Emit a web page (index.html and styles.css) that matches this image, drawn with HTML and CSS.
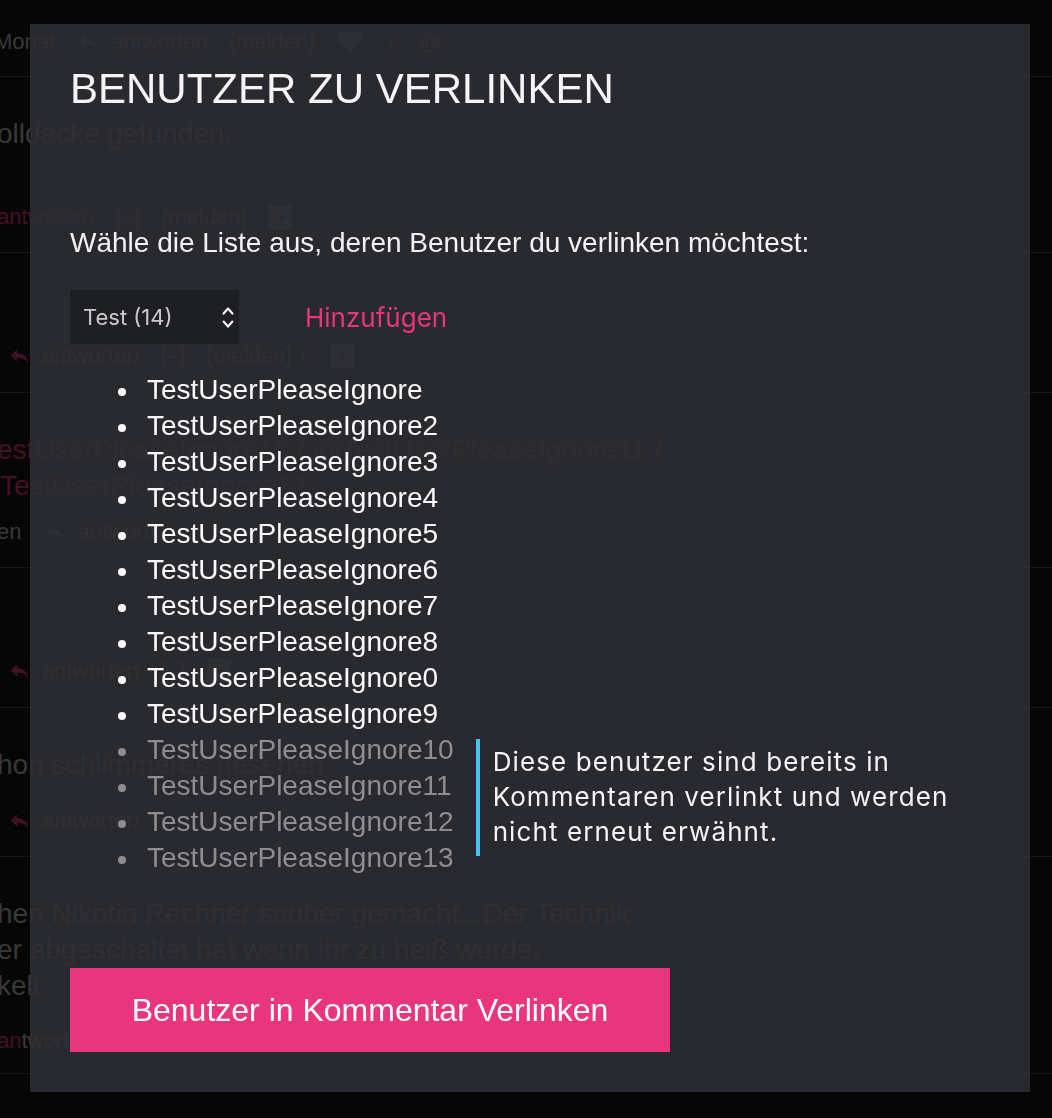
FILE: index.html
```html
<!DOCTYPE html>
<html lang="de">
<head>
<meta charset="utf-8">
<title>Benutzer zu verlinken</title>
<link rel="stylesheet" href="styles.css">
</head>
<body>
<div class="page">
  <div class="comment first">
    <div class="line meta"><span class="cut-m">Monat</span><svg class="reply g" viewBox="0 0 24 24"><path d="M10 5 L3 11.5 L10 18 V14 C15 14 19 15 22 20 C21 13 17 9 10 9 Z"/></svg><span>antworten</span><span>[melden]</span><svg class="heart" viewBox="0 0 24 24"><path d="M12 21 L3.5 12.5 C1 10 1 6 3.5 4 C6 2 9.5 2.5 12 5.5 C14.5 2.5 18 2 20.5 4 C23 6 23 10 20.5 12.5 Z"/></svg><span>↑</span><span>@</span></div>
  </div>
  <div class="comment">
    <div class="line text cut">olldecke gefunden.</div>
    <div class="line actions gap47"><span class="pink cut">antworten</span><span>[–]</span><span>[melden]</span><span class="box">+</span></div>
  </div>
  <div class="comment tall">
    <div class="line actions"><svg class="reply" viewBox="0 0 24 24"><path d="M10 5 L3 11.5 L10 18 V14 C15 14 19 15 22 20 C21 13 17 9 10 9 Z"/></svg><span>antworten</span><span>[–]</span><span>[melden] ↑</span><span class="box">+</span></div>
  </div>
  <div class="comment">
    <div class="line text pink cut">estUserPleaseIgnore10 / @TestUserPleaseIgnore11 /</div>
    <div class="line text pink">TestUserPleaseIgnore12</div>
    <div class="line actions gap10"><span class="cut">en</span><svg class="reply g" viewBox="0 0 24 24"><path d="M10 5 L3 11.5 L10 18 V14 C15 14 19 15 22 20 C21 13 17 9 10 9 Z"/></svg><span>antworten</span></div>
  </div>
  <div class="comment tall">
    <div class="line actions"><svg class="reply" viewBox="0 0 24 24"><path d="M10 5 L3 11.5 L10 18 V14 C15 14 19 15 22 20 C21 13 17 9 10 9 Z"/></svg><span>antworten</span><span>[–]</span><span class="box">+</span></div>
  </div>
  <div class="comment">
    <div class="line text cut">hon schlimmeres gesehen</div>
    <div class="line actions gap20"><svg class="reply" viewBox="0 0 24 24"><path d="M10 5 L3 11.5 L10 18 V14 C15 14 19 15 22 20 C21 13 17 9 10 9 Z"/></svg><span>antworten</span></div>
  </div>
  <div class="comment last">
    <div class="line text cut">hen Nikotin Rechner sauber gemacht...Der Technik</div>
    <div class="line text cut">er abgeschaltet hat wenn ihr zu heiß wurde,</div>
    <div class="line text cut">kelt</div>
    <div class="line actions gap19"><span class="pink cut">an</span><span class="tight">tworten</span></div>
  </div>
</div>

<div class="overlay"></div>

<div class="modal">
  <h1 class="modal-title">BENUTZER ZU VERLINKEN</h1>
  <p class="prompt">Wähle die Liste aus, deren Benutzer du verlinken möchtest:</p>
  <div class="picker">
    <div class="select">
      <span>Test (14)</span>
      <svg class="chevrons" viewBox="0 0 12 23"><path d="M1.6 7.6 L6 2.6 L10.4 7.6 M1.6 15.6 L6 20.6 L10.4 15.6"/></svg>
    </div>
    <a class="add">Hinzufügen</a>
  </div>
  <ul class="users">
    <li>TestUserPleaseIgnore</li>
    <li>TestUserPleaseIgnore2</li>
    <li>TestUserPleaseIgnore3</li>
    <li>TestUserPleaseIgnore4</li>
    <li>TestUserPleaseIgnore5</li>
    <li>TestUserPleaseIgnore6</li>
    <li>TestUserPleaseIgnore7</li>
    <li>TestUserPleaseIgnore8</li>
    <li>TestUserPleaseIgnore0</li>
    <li>TestUserPleaseIgnore9</li>
  </ul>
  <div class="linked">
    <ul class="users done">
      <li>TestUserPleaseIgnore10</li>
      <li>TestUserPleaseIgnore11</li>
      <li>TestUserPleaseIgnore12</li>
      <li>TestUserPleaseIgnore13</li>
    </ul>
    <p class="note">Diese benutzer sind bereits in Kommentaren verlinkt und werden nicht erneut erwähnt.</p>
  </div>
  <button class="submit">Benutzer in Kommentar Verlinken</button>
</div>
</body>
</html>
```

FILE: styles.css
```css
html, body {
  margin: 0;
  padding: 0;
  overflow: hidden;
}

body {
  background: #171717;
  font-family: "Liberation Sans", Arial, sans-serif;
  color: #bcbcbc;
  width: 1052px;
  height: 1118px;
}

/* ---------- background page ---------- */
.page {
  width: 1052px;
}

.comment {
  border-bottom: 1px solid #484848;
  padding: 39px 0 17px 0;
}

.comment.first {
  padding: 24px 0 16px 0;
}

.comment.tall {
  padding-top: 85px;
  padding-bottom: 18px;
}

.comment.last {
  padding-bottom: 14px;
}

.line {
  height: 36px;
  line-height: 36px;
  white-space: nowrap;
  display: flex;
  align-items: center;
}

.line.text {
  font-size: 28px;
}

.line.meta,
.line.actions {
  font-size: 22px;
  gap: 22px;
}

.gap47 { margin-top: 47px; }
.gap19 { margin-top: 19px; }
.gap10 { margin-top: 10px; }
.gap20 { margin-top: 20px; }

.cut { margin-left: -3px; }
.cut-m { margin-left: -6px; }
.tight { margin-left: -22px; }

.pink { color: #e8357f; }

.reply {
  width: 22px;
  height: 22px;
  fill: #e8357f;
  margin-left: 8px;
  margin-right: -10px;
}

.reply.g { fill: #bcbcbc; margin-left: 0; }

.heart {
  width: 28px;
  height: 28px;
  fill: #bcbcbc;
}

.box {
  display: inline-flex;
  width: 24px;
  height: 24px;
  background: #bcbcbc;
  color: #171717;
  font-size: 20px;
  line-height: 24px;
  justify-content: center;
}

/* ---------- overlay & modal ---------- */
.overlay {
  position: fixed;
  inset: 0;
  background: rgba(0, 0, 0, 0.7);
}

.modal {
  position: fixed;
  top: 24px;
  left: 30px;
  width: 1000px;
  height: 1068px;
  box-sizing: border-box;
  padding: 41px 40px 40px 40px;
  background: rgba(46, 47, 52, 0.9);
  display: flex;
  flex-direction: column;
  align-items: flex-start;
  color: #f4f4f4;
}

.modal-title {
  margin: 0;
  font-size: 42px;
  font-weight: normal;
  line-height: 48px;
  color: #f5f5f5;
}

.prompt {
  margin: 112px 0 0 0;
  font-size: 28px;
  line-height: 36px;
  color: #f2f2f2;
}

.picker {
  margin-top: 29px;
  display: flex;
  align-items: center;
}

.select {
  width: 169px;
  height: 54px;
  box-sizing: border-box;
  background: #1e1f22;
  display: flex;
  align-items: center;
  justify-content: space-between;
  padding: 0 5px 0 13px;
  font-family: Inter, "Liberation Sans", sans-serif;
  font-size: 22px;
  color: #cbcbcb;
}

.chevrons {
  width: 12px;
  height: 23px;
  fill: none;
  stroke: #f2f2f2;
  stroke-width: 2.2;
  stroke-linecap: round;
  stroke-linejoin: round;
}

.add {
  margin-left: 66px;
  font-family: Inter, "Liberation Sans", sans-serif;
  font-size: 26px;
  color: #e8357f;
  cursor: pointer;
}

.users {
  list-style: none;
  margin: 28px 0 0 0;
  padding: 0 0 0 48px;
  font-size: 28px;
  line-height: 36px;
  color: #fafafa;
}

.users li {
  display: flex;
  align-items: center;
  white-space: nowrap;
}

.users li::before {
  content: "";
  width: 8px;
  height: 8px;
  border-radius: 50%;
  background: currentColor;
  margin: 4px 21px 0 0;
  flex: none;
}

.linked {
  display: flex;
  align-items: flex-start;
  gap: 22px;
}

.users.done {
  margin-top: 0;
  color: #8e8e8e;
}

.note {
  margin: 7px 0 0 0;
  width: 490px;
  border-left: 4px solid #4fc1f1;
  padding: 5px 0 7px 13px;
  font-family: Inter, "Liberation Sans", sans-serif;
  font-size: 26px;
  line-height: 35px;
  letter-spacing: 1.1px;
  color: #f4f4f4;
}

.submit {
  margin-top: 92px;
  width: 600px;
  height: 84px;
  border: none;
  background: #e9357e;
  color: #ffffff;
  font-family: "Liberation Sans", Arial, sans-serif;
  font-size: 32px;
  padding: 0;
  cursor: pointer;
}
```
